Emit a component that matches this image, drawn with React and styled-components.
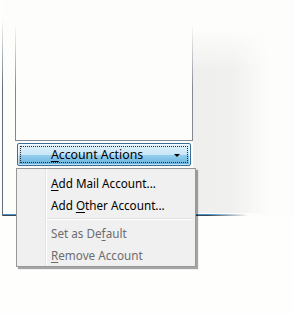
import styled, { createGlobalStyle } from 'styled-components';

const Global = createGlobalStyle`
    html, body {
        margin: 0;
        padding: 0;
        background: #fefefd;
    }
    body {
        font-family: 'Noto Sans', 'Open Sans', sans-serif;
        font-size: 11.7px;
    }
`;

const Page = styled.div`
    position: relative;
    width: 294px;
    height: 315px;
    overflow: hidden;
    background: #fefefd;
`;

const Window = styled.div`
    margin-left: 2px;
    height: 214px;
    padding-bottom: 2px;
    display: flex;
    background:
        linear-gradient(to right, #4a90c8 0, #4a90c8 205px, rgba(74, 144, 200, 0) 245px) left bottom 1px / 100% 1px no-repeat,
        linear-gradient(to right, #3b4652 0, #3b4652 205px, rgba(59, 70, 82, 0) 245px) left bottom / 100% 1px no-repeat,
        #fdfdfb;
    border-left: 1px solid transparent;
    border-image: linear-gradient(to bottom, rgba(90, 110, 130, 0) 20px, #5d6d7c 90px) 1;
`;

const Column = styled.div`
    display: flex;
    flex-direction: column;
    padding-left: 12px;
    width: 178px;
`;

const ListBox = styled.div`
    height: 140px;
    background: #fdfdfb;
    border: 1px solid transparent;
    border-top: 0;
    border-image: linear-gradient(to bottom, rgba(130, 135, 144, 0) 25px, #828790 90px) 1;
`;

const Side = styled.div`
    flex: 1;
    background: linear-gradient(to right, #eff0ee 0, #f0f1ef 40px, rgba(253, 253, 251, 0) 75px);
    mask-image: linear-gradient(to bottom, transparent 30px, #000 70px);
    margin-bottom: 1px;
`;

const Button = styled.div`
    position: relative;
    margin: 2px 0 0 2px;
    width: 172px;
    height: 21px;
    padding-right: 14px;
    box-sizing: content-box;
    width: 158px;
    border: 1px solid #3c6f98;
    border-radius: 2px;
    box-shadow: inset 0 0 0 1px rgba(255, 255, 255, 0.6);
    background: linear-gradient(to bottom, #e5f4fc 0, #c7e6f7 50%, #98d0ef 51%, #63b0dc 100%);
    display: flex;
    align-items: center;
    justify-content: center;
    color: #000;
    font-size: 12.3px;
    &::after {
        content: '';
        position: absolute;
        inset: 2px;
        border: 1px dotted #2b2b2b;
    }
`;

const Arrow = styled.span`
    position: absolute;
    right: 10px;
    top: 10px;
    width: 0;
    height: 0;
    border-left: 3px solid transparent;
    border-right: 3px solid transparent;
    border-top: 3px solid #000;
`;

const Key = styled.span`
    text-decoration: underline;
    text-underline-offset: 2px;
`;

const Menu = styled.div`
    position: absolute;
    left: 16px;
    top: 168px;
    width: 178px;
    padding: 3px 0 0 0;
    border: 1px solid #979797;
    background:
        linear-gradient(to right, transparent 28px, #e2e3e3 28px, #e2e3e3 29px, #ffffff 29px, #ffffff 30px, transparent 30px),
        #f0f0f0;
    box-shadow: 2px 2px 1px rgba(0, 0, 0, 0.35);
`;

const Item = styled.div`
    height: 22px;
    display: flex;
    align-items: center;
    padding-left: 34px;
    color: ${({ disabled }) => (disabled ? '#6d6d6d' : '#000')};
`;

const Separator = styled.div`
    height: 6px;
    display: flex;
    align-items: center;
    padding-left: 30px;
    padding-right: 2px;
    &::before {
        content: '';
        flex: 1;
        border-top: 1px solid #e0e0e0;
        border-bottom: 1px solid #ffffff;
        height: 0;
    }
`;

export default function App() {
    return (
        <Page>
            <Global />
            <Window>
                <Column>
                    <ListBox />
                    <Button>
                        <span>
                            <Key>A</Key>ccount Actions
                        </span>
                        <Arrow />
                    </Button>
                </Column>
                <Side />
            </Window>
            <Menu>
                <Item>
                    <span>
                        <Key>A</Key>dd Mail Account...
                    </span>
                </Item>
                <Item>
                    <span>
                        Add <Key>O</Key>ther Account...
                    </span>
                </Item>
                <Separator />
                <Item disabled>
                    <span>
                        Set as De<Key>f</Key>ault
                    </span>
                </Item>
                <Item disabled>
                    <span>
                        <Key>R</Key>emove Account
                    </span>
                </Item>
            </Menu>
        </Page>
    );
}
